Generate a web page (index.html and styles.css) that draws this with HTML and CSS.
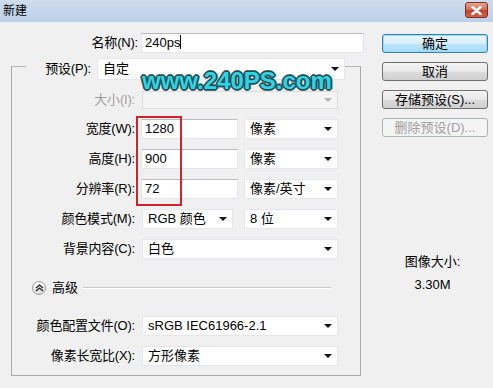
FILE: index.html
```html
<!DOCTYPE html>
<html lang="zh-CN">
<head>
  <meta charset="UTF-8" />
  <title>新建</title>
  <link rel="stylesheet" href="styles.css">
</head>
<body>
  <div class="dialog">
    <div class="titlebar">
      <span class="title">新建</span>
      <div class="close">
        <svg width="11" height="9" viewBox="0 0 11 9"><path d="M1.5 1 L9.5 8 M9.5 1 L1.5 8" stroke="#fff" stroke-width="2.4" stroke-linecap="round"/></svg>
      </div>
    </div>

    <div class="main">
      <div class="form">
        <div class="row name-row">
          <label class="lbl name-lbl">名称(N):</label>
          <div class="input name-input">240ps<span class="caret"></span></div>
        </div>

        <div class="group">
          <div class="group-head">
            <label class="lbl head-lbl">预设(P):</label>
            <div class="combo preset">自定</div>
          </div>

          <div class="row size-row">
            <label class="lbl off">大小(I):</label>
            <div class="combo full disabled"></div>
          </div>

          <div class="row">
            <label class="lbl">宽度(W):</label>
            <div class="input num">1280</div>
            <div class="combo unit">像素</div>
          </div>

          <div class="row">
            <label class="lbl">高度(H):</label>
            <div class="input num">900</div>
            <div class="combo unit">像素</div>
          </div>

          <div class="row">
            <label class="lbl">分辨率(R):</label>
            <div class="input num">72</div>
            <div class="combo unit">像素/英寸</div>
          </div>

          <div class="row">
            <label class="lbl">颜色模式(M):</label>
            <div class="combo mode">RGB 颜色</div>
            <div class="combo unit bits">8 位</div>
          </div>

          <div class="row">
            <label class="lbl">背景内容(C):</label>
            <div class="combo full">白色</div>
          </div>

          <div class="advanced">
            <span class="expander">
              <svg width="9" height="8" viewBox="0 0 9 8"><path d="M1 4 L4.5 1 L8 4 M1 7 L4.5 4 L8 7" fill="none" stroke="#222" stroke-width="1.3"/></svg>
            </span>
            <span class="adv-text">高级</span>
            <span class="adv-line"></span>
          </div>

          <div class="row profile-row">
            <label class="lbl">颜色配置文件(O):</label>
            <div class="combo full">sRGB IEC61966-2.1</div>
          </div>

          <div class="row">
            <label class="lbl">像素长宽比(X):</label>
            <div class="combo full">方形像素</div>
          </div>
        </div>
      </div>

      <div class="side">
        <div class="btn default">确定</div>
        <div class="btn">取消</div>
        <div class="btn">存储预设(S)...</div>
        <div class="btn btn-off">删除预设(D)...</div>

        <div class="info">
          <div class="info-title">图像大小:</div>
          <div class="info-value">3.30M</div>
        </div>
      </div>
    </div>

    <div class="red-box"></div>
    <div class="watermark">www.240PS.com</div>
  </div>
</body>
</html>
```

FILE: styles.css
```css
html, body {
  margin: 0;
  padding: 0;
  background: #f0f0f0;
}

.dialog {
  position: relative;
  width: 493px;
  height: 388px;
  overflow: hidden;
  background: #f0f0f0;
  color: #000;
  font-family: "Liberation Sans", "Noto Sans CJK SC", sans-serif;
  font-size: 13px;
}

.titlebar {
  height: 22px;
  display: flex;
  align-items: center;
  justify-content: space-between;
  background: linear-gradient(#cfdded, #bcd0e8);
}

.title {
  padding-left: 3px;
  font-size: 12px;
  line-height: 22px;
}

.close {
  width: 21px;
  height: 14px;
  margin-right: 5px;
  margin-top: -2px;
  border: 1px solid #7a2f24;
  border-radius: 3px;
  background: linear-gradient(#e9a391, #d6674f 50%, #c2422b 51%, #d06349);
  display: flex;
  align-items: center;
  justify-content: center;
}

.main {
  display: flex;
}

.form {
  width: 372px;
}

.row {
  display: flex;
  align-items: center;
  height: 20px;
  margin-top: 10px;
}

.lbl {
  width: 126px;
  padding-right: 3px;
  box-sizing: border-box;
  text-align: right;
  white-space: nowrap;
  line-height: 20px;
  letter-spacing: -0.2px;
}

.lbl.off {
  color: #a0a0a0;
}

.name-row {
  margin-top: 11px;
}

.name-lbl {
  width: 141px;
}

.input {
  box-sizing: border-box;
  height: 20px;
  background: #fff;
  border: 1px solid #e2e6ea;
  border-top-color: #b9bcc1;
  padding-left: 3px;
  line-height: 18px;
  white-space: nowrap;
}

.name-input {
  width: 223px;
}

.caret {
  display: inline-block;
  width: 1px;
  height: 14px;
  background: #000;
  vertical-align: -2px;
}

.num {
  width: 97px;
  margin-left: 3px;
}

.group {
  margin-left: 11px;
  margin-top: 13px;
  width: 350px;
  height: 310px;
  box-sizing: border-box;
  border: 1px solid #a9a9a9;
  border-top-color: #b4b4b4;
}

.group-head {
  display: flex;
  align-items: center;
  height: 22px;
  margin-top: -9px;
  margin-left: 14px;
  width: 319px;
  background: #f0f0f0;
}

.head-lbl {
  width: 68px;
}

.combo {
  position: relative;
  box-sizing: border-box;
  height: 20px;
  background: #fff;
  border: 1px solid #e4e7eb;
  padding-left: 5px;
  line-height: 18px;
  white-space: nowrap;
}

.combo::after {
  content: "";
  position: absolute;
  right: 5px;
  top: 7px;
  border-left: 4px solid transparent;
  border-right: 4px solid transparent;
  border-top: 4px solid #111;
}

.preset {
  width: 248px;
  height: 22px;
  margin-left: 3px;
  line-height: 20px;
}

.preset::after {
  top: 8px;
}

.full {
  width: 196px;
  margin-left: 4px;
}

.unit {
  width: 94px;
  margin-left: 6px;
}

.mode {
  width: 91px;
  margin-left: 4px;
}

.unit.bits {
  margin-left: 11px;
}

.disabled {
  height: 18px;
  background: #f4f4f4;
  border-color: #dcdcdc;
}

.disabled::after {
  border-top-color: #b0b0b0;
  top: 6px;
}

.size-row {
  margin-top: 11px;
  height: 18px;
}

.advanced {
  display: flex;
  align-items: center;
  height: 16px;
  margin-top: 21px;
  margin-left: 20px;
}

.expander {
  width: 14px;
  height: 14px;
  box-sizing: border-box;
  border: 1px solid #9a9a9a;
  border-radius: 50%;
  background: linear-gradient(#ffffff, #dcdcdc);
  display: flex;
  align-items: center;
  justify-content: center;
}

.adv-text {
  margin-left: 6px;
  line-height: 16px;
}

.adv-line {
  width: 248px;
  margin-left: 5px;
  border-top: 1px solid #c9c9c9;
  border-bottom: 1px solid #fff;
}

.profile-row {
  margin-top: 20px;
}

.side {
  padding-left: 10px;
  padding-top: 12px;
}

.btn {
  box-sizing: border-box;
  width: 106px;
  height: 19px;
  margin-bottom: 9px;
  border: 1px solid #707070;
  border-radius: 3px;
  background: linear-gradient(#f4f4f4, #e8e8e8 50%, #dcdcdc 51%, #cfcfcf);
  text-align: center;
  line-height: 17px;
  white-space: nowrap;
}

.btn.default {
  border-color: #3c7fb1;
  background: linear-gradient(#eaf6fd, #d9f0fc 50%, #bee6fd 51%, #a7d9f5);
  box-shadow: inset 0 0 0 1px #8ee0f8;
}

.btn-off {
  color: #a0a0a0;
  border-color: #adb2b5;
  background: #f4f4f4;
}

.info {
  margin-top: 114px;
  margin-left: -10px;
  width: 121px;
  text-align: center;
}

.info-value {
  margin-top: 7px;
}

.red-box {
  position: absolute;
  left: 136px;
  top: 116px;
  width: 46px;
  height: 90px;
  box-sizing: border-box;
  border: 2px solid #d2232a;
}

.watermark {
  position: absolute;
  left: 142px;
  top: 69px;
  font-family: "Liberation Sans", sans-serif;
  font-weight: bold;
  font-size: 24px;
  line-height: 24px;
  color: #33d3e3;
  text-shadow:
    1px 0 #174f56, -1px 0 #174f56, 0 1px #174f56, 0 -1px #174f56,
    1px 1px #174f56, -1px -1px #174f56, 1px -1px #174f56, -1px 1px #174f56,
    2px 0 #4c6e72, -2px 0 #4c6e72, 0 2px #4c6e72, 0 -2px #4c6e72;
}
```
